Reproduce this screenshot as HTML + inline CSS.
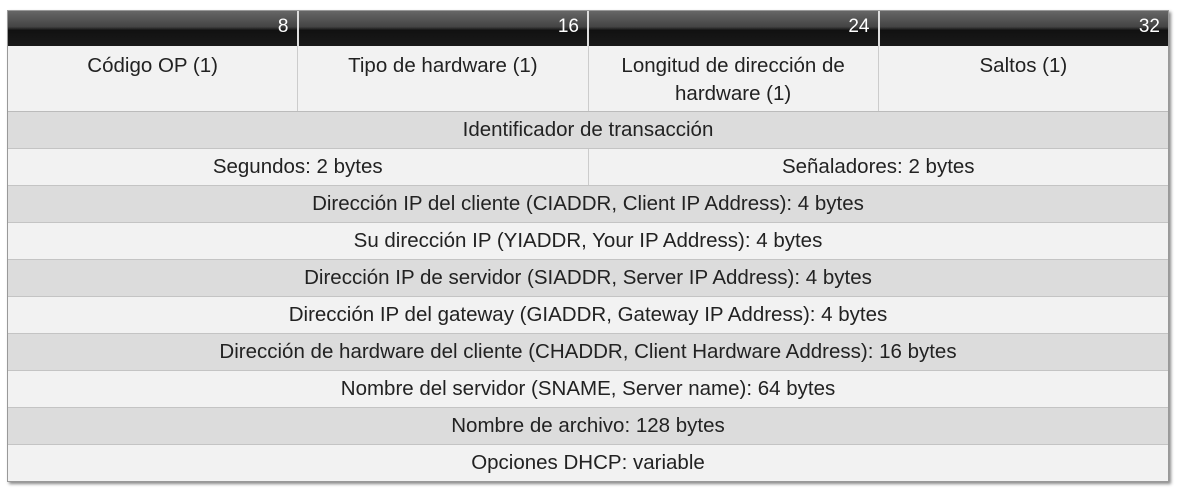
<!DOCTYPE html><html><head><style>
body{margin:0;background:#fff;width:1178px;height:491px;overflow:hidden;font-family:"Liberation Sans",sans-serif;}
.t{position:absolute;left:7px;top:10px;width:1160px;border:1px solid #999;box-shadow:2px 2px 3px #888;background:#f2f2f2;}
.h{display:flex;height:35px;background:linear-gradient(#666 0%,#444 45%,#111 55%,#1a1a1a 100%);}
.h div{flex:1;border-right:2px solid #ddd;color:#fff;font-size:19px;text-align:right;padding:5px 8px 0 0;box-sizing:border-box;}
.h div:last-child{border-right:none}
.r1{display:flex;height:65px;border-bottom:1px solid #bbb;}
.r1 div{flex:1;border-right:1px solid #ccc;text-align:center;font-size:20.5px;color:#222;padding-top:6px;line-height:28px;}
.r1 div:last-child{border-right:none}
.r{height:36px;line-height:36px;text-align:center;font-size:20.5px;color:#222;border-bottom:1px solid #c4c4c4;display:flex;}
.r:last-child{border-bottom:none}
.g{background:#dcdcdc}
.r span{flex:1}
</style></head><body><div class="t">
<div class="h"><div>8</div><div>16</div><div>24</div><div>32</div></div>
<div class="r1"><div>Código OP (1)</div><div>Tipo de hardware (1)</div><div>Longitud de dirección de<br>hardware (1)</div><div>Saltos (1)</div></div>
<div class="r g"><span>Identificador de transacción</span></div>
<div class="r"><span style="border-right:1px solid #ccc">Segundos: 2 bytes</span><span>Señaladores: 2 bytes</span></div>
<div class="r g"><span>Dirección IP del cliente (CIADDR, Client IP Address): 4 bytes</span></div>
<div class="r"><span>Su dirección IP (YIADDR, Your IP Address): 4 bytes</span></div>
<div class="r g"><span>Dirección IP de servidor (SIADDR, Server IP Address): 4 bytes</span></div>
<div class="r"><span>Dirección IP del gateway (GIADDR, Gateway IP Address): 4 bytes</span></div>
<div class="r g"><span>Dirección de hardware del cliente (CHADDR, Client Hardware Address): 16 bytes</span></div>
<div class="r"><span>Nombre del servidor (SNAME, Server name): 64 bytes</span></div>
<div class="r g"><span>Nombre de archivo: 128 bytes</span></div>
<div class="r"><span>Opciones DHCP: variable</span></div>
</div></body></html>
